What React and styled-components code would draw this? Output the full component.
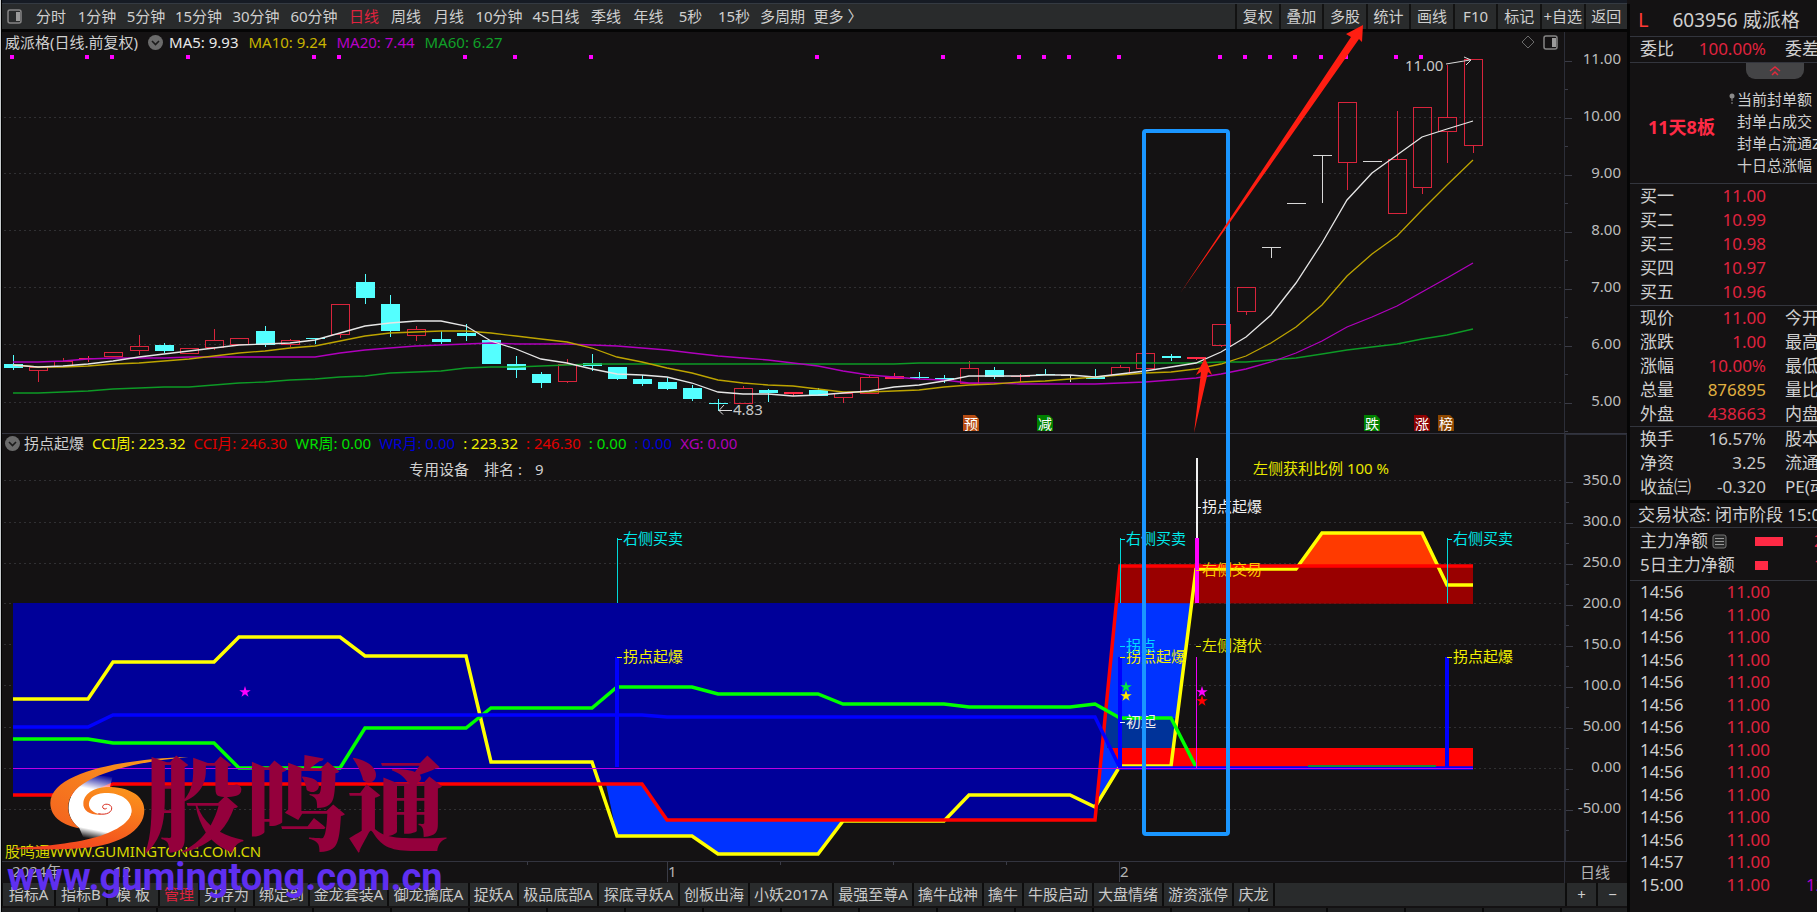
import React from "react";
import styled, { createGlobalStyle } from "styled-components";

const GlobalStyle = createGlobalStyle`
  * { box-sizing: border-box; }
  body {
    margin: 0;
    background: #141213;
    color: #cfcfcf;
    font: 15px/20px "Noto Sans", "Noto Sans CJK SC", sans-serif;
    overflow: hidden;
  }
  button { font: inherit; color: inherit; border: 0; padding: 0; margin: 0; background: none; cursor: pointer; white-space: nowrap; }
  ul, dl, dd, h1 { margin: 0; padding: 0; list-style: none; font-weight: 400; }
  svg { display: block; }
  svg text { font-family: "Noto Sans", "Noto Sans CJK SC", sans-serif; font-size: 15px; }
`;

const RED = "#e0233f";

/* ---------- page frame ---------- */

const Page = styled.div`
  display: flex;
  min-height: 100vh;
  background: #141213;
`;
const Workspace = styled.main`
  position: relative;
  flex: 1;
  min-width: 0;
  display: flex;
  flex-direction: column;
  border-left: 1px solid #c8ccce;
  box-shadow: inset 1px 0 #000;
  padding-left: 1px;
`;
const TopStrip = styled.div`
  height: 4px;
  background: #161b24;
  border-bottom: 1px solid #343a42;
`;
const Toolbar = styled.nav`
  display: flex;
  align-items: center;
  height: 28px;
  padding-bottom: 2px;
  background: #292b2c;
  border-bottom: 3px solid #050505;
`;
const PanelToggle = styled.button`
  width: 28px;
  padding: 1px 0 0 5px;
`;
const PeriodButton = styled.button`
  width: ${(p) => p.$w}px;
  color: ${(p) => (p.$active ? RED : "#cfcfcf")};
`;
const Tools = styled.div`
  display: flex;
  align-self: flex-start;
  width: 392px;
  height: 25px;
  margin-left: auto;
`;
const ToolButton = styled.button`
  flex: 1 1 0;
  min-width: 0;
  padding-bottom: 2px;
  border-left: 2px solid #121212;
`;

const Panel = styled.section`
  display: flex;
  border-bottom: 1px solid #33343f;
`;
const PlotColumn = styled.div`
  flex: 1;
  min-width: 0;
`;
const PlotHeader = styled.header`
  display: flex;
  align-items: center;
  gap: ${(p) => p.$gap}px;
  height: ${(p) => p.$h}px;
  padding: 0 5px 2px 3px;
  white-space: nowrap;
`;
const Reading = styled.span`
  color: ${(p) => p.$c};
`;
const Round = styled.button`
  width: 15px;
  height: 15px;
  margin-right: -4px;
`;
const HeaderTools = styled.div`
  display: flex;
  align-items: center;
  gap: 8px;
  margin-left: auto;
`;
const Plot = styled.svg`
  width: 100%;
  height: auto;
`;
const Axis = styled.ul`
  width: 63px;
  border-left: ${(p) => (p.$framed ? 2 : 1)}px solid #2c2e38;
  border-right: ${(p) => (p.$framed ? 1 : 0)}px solid #2c2e38;
  border-top: ${(p) => (p.$framed ? 1 : 0)}px solid #2c2e38;
  padding-top: ${(p) => p.$top}px;
`;
const AxisLabel = styled.li`
  position: relative;
  height: ${(p) => p.$h}px;
  line-height: ${(p) => p.$h - 4}px;
  text-align: right;
  padding-right: ${(p) => (p.$framed ? 5 : 6)}px;
  color: #bdbdbd;
  &::before, &::after {
    content: "";
    position: absolute;
    left: 0;
    height: 1px;
    background: #3a3b45;
  }
  &::before { width: 7px; top: 50%; }
  &::after { width: 3px; top: 100%; }
`;

const DateRow = styled.div`
  display: flex;
  height: 21px;
`;
const DateUnit = styled.button`
  width: 63px;
  border-left: 1px solid #2c2e38;
  color: #b4b4b4;
  padding: 0 2px 2px 0;
`;

const TabRow = styled.nav`
  display: flex;
  height: 23px;
  padding-left: 1px;
  background: #0d0d0d;
`;
const Tab = styled.button`
  width: ${(p) => p.$w}px;
  background: #292b2c;
  border-right: 2px solid #0d0d0d;
  color: ${(p) => (p.$active ? RED : "#c8c8c8")};
  padding-bottom: 2px;
`;
const TabFill = styled.div`
  flex: 1;
  background: #292b2c;
`;
const ZoomButton = styled.button`
  width: 31px;
  padding-bottom: 2px;
  background: #292b2c;
  border-left: 2px solid #0d0d0d;
`;
const NextRow = styled.div`
  flex: 1;
  min-height: 4px;
  margin-top: 2px;
  background: repeating-linear-gradient(90deg, #1e1f20 0 76px, #090909 76px 78px);
`;

/* ---------- overlays ---------- */

const Annotations = styled.svg`
  position: absolute;
  left: 0;
  top: 0;
  width: 100%;
  height: auto;
  pointer-events: none;
`;
const Watermark = styled.div`
  position: absolute;
  left: 0;
  bottom: 0;
  width: 470px;
  height: 160px;
  pointer-events: none;
`;
const Logo = styled.svg`
  position: absolute;
  left: 0;
  top: 1px;
  width: 200px;
  height: 100px;
`;
const BrandName = styled.div`
  position: absolute;
  left: 142px;
  top: 0;
  font: 900 102px/94px "Noto Serif CJK SC", "Noto Sans CJK SC", serif;
  color: #94003c;
  white-space: nowrap;
`;
const BrandUrl = styled.div`
  position: absolute;
  left: 6px;
  top: 98px;
  font: 700 38px/54px Roboto, "Noto Sans", sans-serif;
  color: #5f2ff0;
  white-space: nowrap;
`;

/* ---------- quote panel ---------- */

const Quote = styled.aside`
  width: 190px;
  flex: none;
  overflow: hidden;
  margin-top: 4px;
  border-left: 3px solid #050505;
  font-size: 17px;
  white-space: nowrap;
`;
const Title = styled.h1`
  display: flex;
  height: 33px;
  align-items: center;
  padding-left: 8px;
  padding-bottom: 1px;
  gap: 24px;
  font-size: 19px;
  border-bottom: 1px solid #33353d;
`;
const Mark = styled.span`
  color: #ff3a35;
  font-size: 20px;
`;
const Block = styled.dl`
  padding-bottom: ${(p) => p.$end || 0}px;
  border-bottom: ${(p) => (p.$thick ? 3 : 1)}px solid ${(p) => (p.$thick ? "#050505" : "#33353d")};
`;
const QuoteRow = styled.div`
  display: grid;
  grid-template-columns: 56px 70px 60px;
  height: 24px;
  line-height: 24px;
  padding-left: 10px;
`;
const Value = styled.dd`
  text-align: right;
  color: ${(p) => p.$c || RED};
`;
const Extra = styled.dt`
  padding-left: 19px;
`;
const Seal = styled.div`
  display: flex;
  justify-content: space-between;
  height: 121px;
  border-bottom: 1px solid #33353d;
`;
const SealCount = styled.strong`
  width: 107px;
  padding: 54px 0 0 18px;
  color: #ff2a45;
  font-size: 18px;
  line-height: 20px;
`;
const SealSide = styled.div`
  width: 80px;
`;
const Fold = styled.button`
  display: flex;
  justify-content: center;
  width: 58px;
  height: 16px;
  margin-left: 9px;
  padding-top: 3px;
  border-radius: 0 0 9px 9px;
  background: #444446;
`;
const SealList = styled.ul`
  padding-top: 9px;
  font-size: 15px;
  line-height: 22px;
`;
const SealItem = styled.li`
  display: flex;
  align-items: center;
`;
const Pin = styled.svg`
  flex: none;
  margin-left: -8px;
  margin-right: 2px;
`;
const Status = styled.p`
  margin: 0;
  height: 25px;
  padding-left: 8px;
  line-height: 24px;
  border-bottom: 1px solid #33353d;
`;
const Flow = styled.div`
  padding: 1px 0 3px 10px;
  border-bottom: 1px solid #33353d;
`;
const FlowRow = styled.div`
  display: grid;
  grid-template-columns: 115px 59px 40px;
  height: 24px;
  line-height: 24px;
  align-items: center;
`;
const FlowLabel = styled.span`
  display: flex;
  align-items: center;
  gap: 4px;
`;
const FlowBar = styled.span`
  width: ${(p) => p.$w}px;
  height: 9px;
  background: #ff2a45;
`;
const FlowValue = styled.span`
  color: ${RED};
`;
const Ticks = styled.table`
  width: 220px;
  height: 315px;
  table-layout: fixed;
  border-collapse: collapse;
  line-height: 20px;
  td { padding: 0; }
`;
const TimeCell = styled.td`
  width: 66px;
  text-indent: 10px;
`;
const PriceCell = styled.td`
  width: 74px;
  text-align: right;
  color: ${RED};
`;
const VolumeCell = styled.td`
  text-indent: 36px;
  color: #b000d0;
`;

/* ---------- data ---------- */

const X = (i) => Math.round(12.8 + 25.17 * i);

// kind, body top, body bottom, wick top, wick bottom, as y positions in the plot
const candles = [
  ["d", 364, 368, 355, 370], ["u", 367, 370, 367, 382], ["u", 361, 366, 358, 366], ["f", 358, 359, 356, 362],
  ["u", 352, 356, 352, 356], ["u", 346, 350, 335, 355], ["d", 345, 351, 343, 353], ["u", 348, 353, 348, 353],
  ["u", 340, 347, 329, 350], ["u", 338, 344, 338, 344], ["d", 331, 345, 326, 347], ["u", 340, 344, 339, 347],
  ["d", 338, 339, 338, 344], ["u", 304, 334, 304, 338], ["d", 282, 298, 274, 304], ["d", 304, 331, 295, 337],
  ["u", 329, 335, 326, 341], ["d", 339, 342, 331, 344], ["d", 333, 336, 324, 341], ["d", 340, 364, 340, 364],
  ["d", 364, 370, 356, 378], ["d", 374, 383, 372, 388], ["u", 364, 381, 359, 383], ["d", 363, 366, 354, 371],
  ["d", 367, 379, 367, 380], ["d", 379, 384, 375, 386], ["d", 382, 389, 378, 390], ["d", 388, 399, 385, 401],
  ["d", 403, 404, 399, 411], ["u", 388, 403, 386, 403], ["d", 390, 393, 389, 402], ["f", 392, 394, 392, 396],
  ["d", 390, 396, 388, 396], ["u", 393, 397, 393, 403], ["u", 377, 393, 375, 393], ["f", 376, 379, 373, 379],
  ["d", 377, 378, 372, 379], ["d", 378, 380, 375, 383], ["u", 368, 383, 361, 383], ["d", 370, 377, 367, 379],
  ["f", 376, 377, 374, 382], ["d", 374, 375, 369, 375], ["w", 375, 376, 375, 382], ["d", 377, 379, 369, 379],
  ["u", 367, 374, 365, 374], ["u", 353, 368, 353, 368], ["d", 356, 358, 354, 361], ["f", 357, 359, 357, 360],
  ["u", 324, 345, 324, 347], ["u", 287, 311, 287, 315], ["w", 247, 248, 247, 258], ["w", 203, 204, 203, 204],
  ["w", 155, 156, 155, 203], ["u", 102, 162, 102, 190], ["w", 161, 162, 161, 162], ["u", 159, 213, 111, 213],
  ["u", 107, 187, 107, 194], ["u", 117, 131, 65, 163], ["u", 59, 145, 59, 153],
];
const ma5 = [365, 367, 366, 364, 361, 357, 354, 351, 348, 345, 344, 343, 340, 333, 326, 323, 321, 321, 326, 341, 349, 359, 363, 369, 374, 375, 377, 383, 392, 394, 394, 396, 395, 393, 391, 387, 385, 381, 376, 376, 376, 375, 375, 377, 374, 371, 367, 363, 352, 337, 315, 283, 243, 200, 173, 155, 137, 129, 121];
const ma10 = [365, 367, 367, 366, 364, 363, 361, 359, 356, 353, 351, 348, 346, 341, 336, 333, 332, 331, 331, 333, 336, 339, 342, 348, 357, 362, 368, 373, 380, 383, 385, 386, 389, 392, 392, 391, 390, 387, 385, 384, 382, 381, 379, 377, 375, 373, 372, 369, 364, 356, 343, 327, 305, 276, 254, 236, 210, 185, 160];
const ma20 = [362, 362, 361, 359, 358, 358, 358, 357, 357, 357, 357, 357, 357, 353, 350, 348, 346, 345, 344, 343, 344, 344, 344, 345, 346, 348, 350, 353, 356, 358, 360, 363, 366, 371, 375, 377, 379, 380, 383, 383, 384, 384, 384, 384, 383, 382, 380, 378, 374, 369, 362, 353, 341, 327, 317, 306, 292, 278, 263];
const ma60 = [393, 393, 392, 391, 389, 388, 387, 387, 385, 383, 382, 380, 379, 377, 376, 373, 372, 371, 368, 367, 367, 366, 365, 364, 364, 364, 364, 364, 364, 364, 364, 364, 364, 364, 364, 364, 363, 363, 363, 363, 363, 363, 363, 363, 363, 363, 363, 363, 362, 362, 360, 358, 354, 350, 347, 344, 339, 335, 329];
const dots = [0, 3, 4, 7, 12, 13, 18, 20, 23, 32, 37, 40, 41, 42, 44, 48, 49, 50, 51, 52, 53, 55, 56];

const line = (ys) => ys.map((y, i) => `${X(i)},${y}`).join(" ");
// steps: [first index, last index, y]
const steps = (list) => list.flatMap(([a, b, y]) => [`${X(a)},${y}`, `${X(b)},${y}`]).join(" ");

const cciWeek = [[0, 3, 699], [4, 8, 662], [9, 13, 637], [14, 18, 656], [19, 23, 762], [24, 27, 836], [28, 32, 854], [33, 37, 821], [38, 42, 795], [43, 43, 807], [44, 46, 766], [47, 51, 569], [52, 56, 533], [57, 58, 585]];
const cciMonth = [[0, 3, 795], [4, 25, 784], [26, 43, 820], [44, 58, 566]];
const wrWeek = [[0, 3, 739], [4, 8, 743], [9, 13, 768], [14, 18, 728], [19, 23, 708], [24, 27, 687], [28, 32, 694], [33, 37, 704], [38, 42, 707], [43, 43, 704], [44, 46, 718], [47, 47, 767]];
const wrMonth = [[0, 3, 727], [4, 25, 715], [26, 43, 717], [44, 58, 768]];

const periods = [["分时", 42], ["1分钟", 50], ["5分钟", 48], ["15分钟", 57], ["30分钟", 58], ["60分钟", 58], ["日线", 42], ["周线", 42], ["月线", 44], ["10分钟", 56], ["45日线", 58], ["季线", 42], ["年线", 43], ["5秒", 41], ["15秒", 46], ["多周期", 51], ["更多 〉", 60]];
const tools = ["复权", "叠加", "多股", "统计", "画线", "F10", "标记", "+自选", "返回"];
const tabs = [["指标A", 53], ["指标B", 52], ["模 板", 52], ["管理", 40], ["另存为", 55], ["绑定到", 55], ["金龙套装A", 79], ["御龙擒底A", 81], ["捉妖A", 49], ["极品底部A", 80], ["探底寻妖A", 81], ["创板出海", 70], ["小妖2017A", 84], ["最强至尊A", 80], ["擒牛战神", 70], ["擒牛", 40], ["牛股启动", 70], ["大盘情绪", 70], ["游资涨停", 70], ["庆龙", 41]];
const subReadings = [["CCI周: 223.32", "#f0f000"], ["CCI月: 246.30", "#e00000"], ["WR周: 0.00", "#00e000"], ["WR月: 0.00", "#0000d8"], [": 223.32", "#f0f000"], [": 246.30", "#e00000"], [": 0.00", "#00e000"], [": 0.00", "#0000d8"], ["XG: 0.00", "#b000b8"]];
const bids = [["买一", "11.00"], ["买二", "10.99"], ["买三", "10.98"], ["买四", "10.97"], ["买五", "10.96"]];
const prices = [["现价", "11.00", "今开"], ["涨跌", "1.00", "最高"], ["涨幅", "10.00%", "最低"], ["总量", "876895", "量比", "#e0b040"], ["外盘", "438663", "内盘"]];
const basics = [["换手", "16.57%", "股本"], ["净资", "3.25", "流通"], ["收益㈢", "-0.320", "PE(动)"]];
const times = [...Array(12).fill("14:56"), "14:57", "15:00"];

/* ---------- drawings ---------- */

const SplitIcon = () => (
  <svg width="16" height="15" viewBox="0 0 16 15" aria-hidden="true">
    <rect x="1" y="1" width="13" height="13" rx="2" fill="none" stroke="#858585" strokeWidth="1.5" />
    <rect x="9" y="3" width="4" height="9" fill="#9a9a9a" />
  </svg>
);
const ChevronRound = () => (
  <Round aria-label="展开">
    <svg width="15" height="15" viewBox="0 0 15 15">
      <circle cx="7.5" cy="7.5" r="7.5" fill="#6b6b6b" />
      <path d="M4 6l3.500 3.500L11 6" fill="none" stroke="#1b1b1b" strokeWidth="1.600" />
    </svg>
  </Round>
);

function Candle({ i, data: [kind, top, bottom, high, low] }) {
  const x = X(i);
  const color = { d: "#54ffff", u: "#d8243c", f: "#ff2a45", w: "#d8d8d8" }[kind];
  const hollow = kind === "u";
  return (
    <g shapeRendering="crispEdges">
      {high < top && <rect x={x} y={high} width="1" height={top - high} fill={color} />}
      {low > bottom && <rect x={x} y={bottom} width="1" height={low - bottom} fill={color} />}
      {hollow ? (
        <rect x={x - 8.5} y={top + 0.5} width="18" height={bottom - top} fill="none" stroke={color} />
      ) : (
        <rect x={x - 9} y={top} width="19" height={Math.max(1, bottom - top)} fill={color} />
      )}
    </g>
  );
}

function Badge({ x, color, children }) {
  return (
    <g>
      <path d={`M${x} 415h12l4 4v12h-16z`} fill={color} />
      <text x={x + 1} y="429" fill="#fff" style={{ fontSize: 14 }}>{children}</text>
    </g>
  );
}

function Callout({ i, y, color, children }) {
  return (
    <g>
      <rect x={X(i)} y={y} width="5" height="1" fill={color} />
      <text x={X(i) + 6} y={y + 5} fill={color}>{children}</text>
    </g>
  );
}

function Star({ x, y, color }) {
  const pts = Array.from({ length: 10 }, (_, k) => {
    const r = k % 2 ? 2.3 : 6;
    const a = (Math.PI / 5) * k - Math.PI / 2;
    return `${x + r * Math.cos(a)},${y + r * Math.sin(a)}`;
  }).join(" ");
  return <polygon points={pts} fill={color} />;
}

const GridLines = ({ ys }) =>
  ys.map((y) => <line key={y} x1="4" x2="1562" y1={y + 0.5} y2={y + 0.5} stroke="#303033" strokeDasharray="2 3" />);

function PricePlot() {
  return (
    <Plot viewBox="2 54 1562 379" role="img" aria-label="日线">
      <GridLines ys={[117, 173, 230, 287, 344, 402]} />
      {dots.map((i) => <rect key={i} x={X(i) - 3} y="55" width="4" height="4" fill="#f0f" />)}
      {candles.map((c, i) => <Candle key={i} i={i} data={c} />)}
      <g fill="none" strokeWidth="1.3">
        <polyline points={line(ma60)} stroke="#0d9a26" />
        <polyline points={line(ma20)} stroke="#b000bd" />
        <polyline points={line(ma10)} stroke="#bda400" />
        <polyline points={line(ma5)} stroke="#e6e6e6" />
      </g>
      <g stroke="#dcdcdc" fill="none">
        <path d="M1446 64L1470 60M1464 57l7 3-5 5" />
        <path d="M732 410.500H719M724 405l-5 5.500 4 4" />
      </g>
      <text x="1405" y="71" fill="#c8c8c8">11.00</text>
      <text x="733" y="415" fill="#c8c8c8">4.83</text>
      <Badge x={963} color="#b84c12">预</Badge>
      <Badge x={1037} color="#008000">减</Badge>
      <Badge x={1364} color="#008000">跌</Badge>
      <Badge x={1414} color="#8c0000">涨</Badge>
      <Badge x={1438} color="#8c4600">榜</Badge>
    </Plot>
  );
}

function SignalPlot() {
  return (
    <Plot viewBox="2 454 1562 407" role="img" aria-label="拐点起爆">
      <GridLines ys={[480, 522, 563, 603, 644, 685, 727, 768, 809]} />
      {/* filled zones */}
      <polygon points="13,603 1116,603 1096,820 667,820 642,784 114,784 88,795 13,795" fill="#000099" />
      <polygon points="606,784 642,784 667,820 844,820 819,854 717,854 692,836 617,836" fill="#0033ff" />
      <polygon points="1116,603 1191,603 1171,768 1120,768 1097,807" fill="#0033ff" />
      <polygon points="1104,710 1120,718 1177,718 1174,748 1107,748" fill="#003399" />
      <rect x="1112" y="748" width="361" height="20" fill="#ff0000" />
      <polygon points="1097,807 1107,748 1112,748 1120,768" fill="#0033ff" />
      <polygon points="1117,603 1120,566 1473,566 1473,604" fill="#990000" />
      <polygon points="1301,565 1322,533 1422,533 1438,565" fill="#ff3a00" />
      {/* indicator lines */}
      <g fill="none" strokeWidth="3.500">
        <polyline points={steps(cciWeek)} stroke="#ffff00" />
        <polyline points={steps(cciMonth)} stroke="#ff0000" />
        <polyline points={steps(wrWeek)} stroke="#00ff00" />
        <polyline points={steps(wrMonth)} stroke="#0000ff" />
      </g>
      <rect x="1308" y="765" width="128" height="2" fill="#148a3a" />
      <rect x="13" y="768" width="1460" height="1" fill="#c000e0" />
      {/* signal bars */}
      {[24, 44, 57].map((i) => (
        <g key={i}>
          <rect x={X(i) - 2} y="657" width="4" height="110" fill="#0000ff" />
          <rect x={X(i)} y="538" width="1" height="65" fill="#00d8d8" />
          <Callout i={i} y={539} color="#00e8e8">右侧买卖</Callout>
          <Callout i={i} y={657} color="#f0f000">拐点起爆</Callout>
        </g>
      ))}
      <rect x="1196" y="458" width="2" height="80" fill="#f0f0f0" />
      <rect x="1195" y="538" width="4" height="65" fill="#ff00ff" />
      <rect x="1196" y="657" width="1" height="111" fill="#f000f8" />
      <Callout i={47} y={507} color="#f0f0f0">拐点起爆</Callout>
      <Callout i={47} y={570} color="#ffc800">右侧交易</Callout>
      <Callout i={47} y={646} color="#e8e800">左侧潜伏</Callout>
      <Callout i={44} y={646} color="#00d8ff">拐点</Callout>
      <Callout i={44} y={722} color="#f0f0f0">初起</Callout>
      <Star x={245} y={692} color="#ff00ff" />
      <Star x={1126} y={687} color="#00e840" />
      <Star x={1126} y={696} color="#ffe800" />
      <Star x={1202} y={692} color="#ff00ff" />
      <Star x={1202} y={701} color="#ff0000" />
      <text x="409" y="475" fill="#d0d0d0">专用设备</text>
      <text x="484" y="475" fill="#d0d0d0">排名 :</text>
      <text x="535" y="475" fill="#d0d0d0">9</text>
      <text x="1253" y="474" fill="#e8e800">左侧获利比例 100 %</text>
      <text x="5" y="857" fill="#d8d800">股鸣通WWW.GUMINGTONG.COM.CN</text>
    </Plot>
  );
}

function DatePlot() {
  return (
    <Plot viewBox="2 862 1562 20" role="img" aria-label="日期">
      {[527, 780, 893, 1006].map((x) => <rect key={x} x={x} y="862" width="1" height="3" fill="#3a3b45" />)}
      {[667, 1119].map((x) => <rect key={x} x={x} y="862" width="1" height="20" fill="#3a3b45" />)}
      <g fill="#b4b4b4">
        <text x="12" y="877">2024年</text>
        <text x="114" y="877">12</text>
        <text x="668" y="877">1</text>
        <text x="1120" y="877">2</text>
      </g>
    </Plot>
  );
}

function BrandLogo() {
  return (
    <Logo viewBox="0 40 600 300" aria-hidden="true">
      <defs>
        <linearGradient id="swoosh" x1="1" y1="0" x2="0" y2="1">
          <stop offset="0" stopColor="#f9a01c" />
          <stop offset="1" stopColor="#f4611f" />
        </linearGradient>
        <linearGradient id="tail" x1="0.800" y1="0" x2="0.300" y2="1">
          <stop offset="0" stopColor="#fb931b" />
          <stop offset="1" stopColor="#f2401f" />
        </linearGradient>
        <linearGradient id="fade" x1="0.600" y1="0" x2="0.400" y2="1">
          <stop offset="0" stopColor="#fff" stopOpacity="0" />
          <stop offset="0.250" stopColor="#fff" />
          <stop offset="0.850" stopColor="#fff" />
          <stop offset="1" stopColor="#fff" stopOpacity="0" />
        </linearGradient>
      </defs>
      <path d="M203 195C208 155 240 130 275 108L335 110L325 150C400 150 402 200 390 228C375 265 320 292 250 300L235 266C212 245 200 225 203 195Z" fill="url(#fade)" />
      <path d="M264 160H340L392 200L385 240L330 275L240 262L215 225L225 175Z" fill="#fff" />
      <path d="M562 52C400 56 150 90 148 190C148 235 190 258 235 266C205 240 198 215 203 190C215 120 350 72 562 52Z" fill="url(#swoosh)" />
      <path d="M247 190C250 155 290 140 330 142C390 145 430 170 430 212C430 270 360 325 200 328C130 330 70 330 30 325C120 322 230 310 300 288C360 268 393 240 392 212C390 175 350 158 310 160C275 162 262 180 264 198C268 215 285 222 305 225C270 228 245 215 247 190Z" fill="url(#tail)" />
      <path d="M292 222C318 228 334 216 332 204C330 192 308 190 305 200C304 208 312 210 317 206" fill="none" stroke="#d92a1c" strokeWidth="3" />
    </Logo>
  );
}

/* ---------- page ---------- */

function Rows({ rows, neutral }) {
  return rows.map(([label, value, extra, color]) => (
    <QuoteRow key={label}>
      <dt>{label}</dt>
      <Value $c={color || (neutral ? "#c8c8c8" : undefined)}>{value}</Value>
      {extra && <Extra>{extra}</Extra>}
    </QuoteRow>
  ));
}

export default function App() {
  return (
    <Page>
      <GlobalStyle />
      <Workspace>
        <TopStrip />
        <Toolbar>
          <PanelToggle aria-label="侧栏"><SplitIcon /></PanelToggle>
          {periods.map(([name, w]) => (
            <PeriodButton key={name} $w={w} $active={name === "日线"}>{name}</PeriodButton>
          ))}
          <Tools>{tools.map((t) => <ToolButton key={t}>{t}</ToolButton>)}</Tools>
        </Toolbar>

        <Panel>
          <PlotColumn>
            <PlotHeader $h={22} $gap={10}>
              <span>威派格(日线.前复权)</span>
              <ChevronRound />
              <Reading $c="#e8e8e8">MA5: 9.93</Reading>
              <Reading $c="#c8b400">MA10: 9.24</Reading>
              <Reading $c="#b800c8">MA20: 7.44</Reading>
              <Reading $c="#10a028">MA60: 6.27</Reading>
              <HeaderTools>
                <svg width="14" height="14" viewBox="0 0 14 14" aria-hidden="true">
                  <path d="M7 1l6 6-6 6-6-6z" fill="none" stroke="#6a6a6a" />
                </svg>
                <SplitIcon />
              </HeaderTools>
            </PlotHeader>
            <PricePlot />
          </PlotColumn>
          <Axis $top={0}>
            {["11.00", "10.00", "9.00", "8.00", "7.00", "6.00", "5.00"].map((v) => (
              <AxisLabel key={v} $h={57}>{v}</AxisLabel>
            ))}
          </Axis>
        </Panel>

        <Panel>
          <PlotColumn>
            <PlotHeader $h={20} $gap={8}>
              <ChevronRound />
              <span>拐点起爆</span>
              {subReadings.map(([text, c], i) => <Reading key={i} $c={c}>{text}</Reading>)}
            </PlotHeader>
            <SignalPlot />
          </PlotColumn>
          <Axis $framed $top={26}>
            {["350.0", "300.0", "250.0", "200.0", "150.0", "100.0", "50.00", "0.00", "-50.00"].map((v) => (
              <AxisLabel key={v} $h={41} $framed>{v}</AxisLabel>
            ))}
          </Axis>
        </Panel>

        <DateRow>
          <PlotColumn><DatePlot /></PlotColumn>
          <DateUnit>日线</DateUnit>
        </DateRow>

        <TabRow>
          {tabs.map(([name, w]) => <Tab key={name} $w={w} $active={name === "管理"}>{name}</Tab>)}
          <TabFill />
          <ZoomButton>+</ZoomButton>
          <ZoomButton>−</ZoomButton>
        </TabRow>
        <NextRow />

        <Annotations viewBox="1 0 1626 912" aria-hidden="true">
          <rect x="1144" y="131" width="84" height="703" rx="2" fill="none" stroke="#1a96ff" strokeWidth="4" />
          <polygon points="1181,292 1351,37 1346,34 1363,25 1362,42 1359,39" fill="#ff1e12" />
          <polygon points="1194,433 1201,372 1196,375 1205,358 1212,375 1208,372" fill="#ff1e12" />
        </Annotations>
        <Watermark>
          <BrandLogo />
          <BrandName>股鸣通</BrandName>
          <BrandUrl>www.gumingtong.com.cn</BrandUrl>
        </Watermark>
      </Workspace>

      <Quote>
        <Title><Mark>L</Mark><span>603956 威派格</span></Title>
        <Block $end={1}>
          <QuoteRow><dt>委比</dt><Value>100.00%</Value><Extra>委差</Extra></QuoteRow>
        </Block>
        <Seal>
          <SealCount>11天8板</SealCount>
          <SealSide>
            <Fold aria-label="收起">
              <svg width="14" height="10" viewBox="0 0 14 10">
                <path d="M2 5l5-4 5 4M4 9l3-3 3 3" fill="none" stroke="#e02a3c" strokeWidth="1.500" />
              </svg>
            </Fold>
            <SealList>
              <SealItem>
                <Pin width="6" height="12" viewBox="0 0 6 12"><circle cx="3" cy="3" r="2.500" fill="#8a8a8a" /><path d="M3 5v6" stroke="#8a8a8a" strokeDasharray="3 1" /></Pin>
                当前封单额
              </SealItem>
              <SealItem>封单占成交</SealItem>
              <SealItem>封单占流通Z</SealItem>
              <SealItem>十日总涨幅</SealItem>
            </SealList>
          </SealSide>
        </Seal>
        <Block $end={1}><Rows rows={bids} /></Block>
        <Block><Rows rows={prices} /></Block>
        <Block $thick $end={1}><Rows rows={basics} neutral /></Block>
        <Status>交易状态: 闭市阶段 15:00</Status>
        <Flow>
          <FlowRow>
            <FlowLabel>
              主力净额
              <svg width="15" height="15" viewBox="0 0 15 15" aria-hidden="true">
                <rect x="1" y="1" width="13" height="13" rx="2" fill="#2a2a2a" stroke="#777" />
                <path d="M3 4.500h9M3 7.500h9M3 10.500h9" stroke="#999" />
              </svg>
            </FlowLabel>
            <FlowBar $w={28} />
            <FlowValue>2</FlowValue>
          </FlowRow>
          <FlowRow>
            <FlowLabel>5日主力净额</FlowLabel>
            <FlowBar $w={13} />
            <FlowValue>1</FlowValue>
          </FlowRow>
        </Flow>
        <Ticks>
          <tbody>
            {times.map((t, i) => (
              <tr key={i}>
                <TimeCell>{t}</TimeCell>
                <PriceCell>11.00</PriceCell>
                <VolumeCell>{i === times.length - 1 ? "12" : ""}</VolumeCell>
              </tr>
            ))}
          </tbody>
        </Ticks>
      </Quote>
    </Page>
  );
}
